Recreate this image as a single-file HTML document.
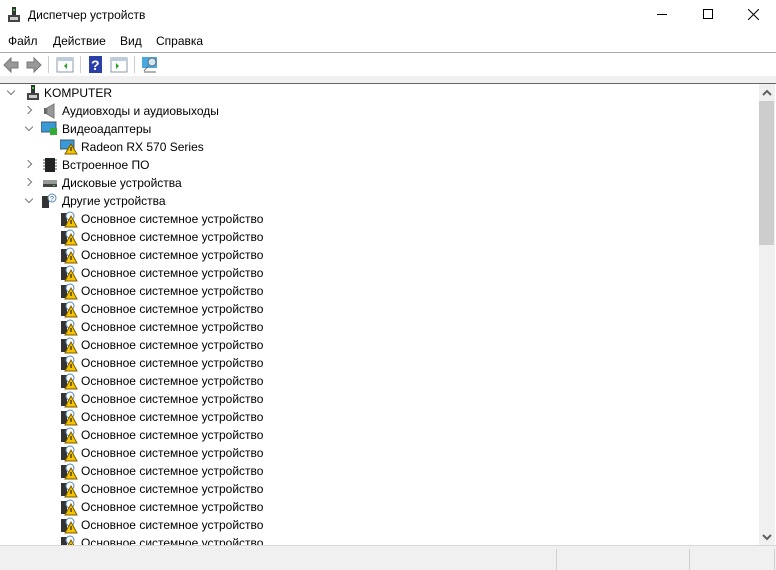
<!DOCTYPE html>
<html><head><meta charset="utf-8"><style>
*{margin:0;padding:0;box-sizing:border-box}
body{width:776px;height:570px;overflow:hidden;background:#fff;font-family:"Liberation Sans","DejaVu Sans",sans-serif;font-size:12px;color:#000;position:relative}
.abs{position:absolute}
.t{position:absolute;white-space:nowrap;line-height:14px}
.row{position:absolute;height:18px;white-space:nowrap}
.chev{position:absolute;width:6px;height:6px;border-right:1.5px solid #777;border-bottom:1.5px solid #777}
</style></head><body>
<!-- title bar -->
<svg class="abs" style="left:7px;top:7px" width="14" height="16"><rect x="5" y="0" width="4" height="8" fill="#333"/><rect x="6" y="2" width="2" height="2" fill="#3c3"/><rect x="1" y="8" width="12" height="7" fill="#444"/><rect x="3" y="10" width="8" height="3" fill="#ccc"/></svg>
<div class="t" style="left:28px;top:8px">Диспетчер устройств</div>
<div class="abs" style="left:657px;top:14px;width:10px;height:1px;background:#000"></div>
<div class="abs" style="left:703px;top:9px;width:10px;height:10px;border:1px solid #000"></div>
<svg class="abs" style="left:748px;top:9px" width="11" height="11"><path d="M0 0L11 11M11 0L0 11" stroke="#000" stroke-width="1"/></svg>
<!-- menu -->
<div class="t" style="left:8px;top:34px">Файл</div>
<div class="t" style="left:53px;top:34px">Действие</div>
<div class="t" style="left:120px;top:34px">Вид</div>
<div class="t" style="left:156px;top:34px">Справка</div>
<div class="abs" style="left:0;top:52px;width:776px;height:1px;background:#aaa"></div>
<!-- toolbar -->
<svg class="abs" style="left:0;top:53px" width="170" height="23">
<path d="M4 12l7-7v4h7v6h-7v4z" fill="#999" stroke="#777"/>
<path d="M41 12l-7-7v4h-7v6h7v4z" fill="#999" stroke="#777"/>
<rect x="48" y="3" width="1" height="17" fill="#ccc"/>
<rect x="57" y="5" width="16" height="14" fill="#fff" stroke="#8899aa"/><rect x="57" y="5" width="16" height="3" fill="#bcd"/><path d="M67 10l-3 3 3 3z" fill="#2a2"/>
<rect x="80" y="3" width="1" height="17" fill="#ccc"/>
<rect x="89" y="3" width="13" height="17" fill="#2b3fa8"/><text x="91" y="17" fill="#fff" font-size="14" font-weight="bold" font-family="Liberation Sans">?</text>
<rect x="111" y="5" width="16" height="14" fill="#fff" stroke="#8899aa"/><rect x="111" y="5" width="16" height="3" fill="#bcd"/><path d="M116 10l3 3-3 3z" fill="#2a2"/>
<rect x="134" y="3" width="1" height="17" fill="#ccc"/>
<rect x="142" y="4" width="15" height="11" fill="#4aa8e0"/><circle cx="152" cy="9" r="4" fill="#cfe8f8" stroke="#666"/><path d="M148 13l-4 5M144 19h12" stroke="#666"/>
</svg>
<div class="abs" style="left:0;top:76px;width:776px;height:7px;background:#f0f0f0"></div>
<div class="abs" style="left:0;top:83px;width:776px;height:1px;background:#666"></div>
<!-- scrollbar -->
<div class="abs" style="left:759px;top:84px;width:16px;height:461px;background:#f0f0f0"></div>
<div class="abs" style="left:759px;top:101px;width:15px;height:144px;background:#cdcdcd"></div>
<svg class="abs" style="left:762px;top:89px" width="10" height="8"><path d="M1 6l4-4 4 4" stroke="#606060" stroke-width="2" fill="none"/></svg>
<svg class="abs" style="left:762px;top:533px" width="10" height="8"><path d="M1 2l4 4 4-4" stroke="#606060" stroke-width="2" fill="none"/></svg>
<!-- status bar -->
<div class="abs" style="left:0;top:545px;width:776px;height:25px;background:#f0f0f0;border-top:1px solid #d8d8d8"></div>
<div class="abs" style="left:556px;top:549px;width:1px;height:21px;background:#d0d0d0"></div>
<div class="abs" style="left:689px;top:549px;width:1px;height:21px;background:#d0d0d0"></div>
<div class="abs" style="left:774px;top:549px;width:1px;height:21px;background:#d0d0d0"></div>
<!-- tree -->
<div class="abs" style="left:0;top:84px;width:759px;height:461px;overflow:hidden">
<div class="chev" style="left:8px;top:4px;transform:rotate(45deg)"></div>
<svg class="abs" style="left:26px;top:1px" width="14" height="16"><rect x="5" y="0" width="4" height="8" fill="#333"/><rect x="6" y="2" width="2" height="2" fill="#3c3"/><rect x="1" y="8" width="12" height="7" fill="#444"/><rect x="3" y="10" width="8" height="3" fill="#ccc"/></svg>
<div class="t" style="left:44px;top:2px">KOMPUTER</div>

<div class="chev" style="left:25px;top:23px;transform:rotate(-45deg)"></div>
<svg class="abs" style="left:43px;top:19px" width="14" height="16"><rect x="1" y="5" width="3" height="6" fill="#666"/><path d="M4 5l7-4v14l-7-4z" fill="#999" stroke="#777"/></svg>
<div class="t" style="left:62px;top:20px">Аудиовходы и аудиовыходы</div>

<div class="chev" style="left:26px;top:40px;transform:rotate(45deg)"></div>
<svg class="abs" style="left:41px;top:37px" width="17" height="16"><rect x="0" y="1" width="15" height="10" fill="#3a9ad8" stroke="#456"/><rect x="9" y="7" width="7" height="7" fill="#3a3"/></svg>
<div class="t" style="left:62px;top:38px">Видеоадаптеры</div>

<svg class="abs" style="left:60px;top:55px" width="18" height="16"><rect x="0" y="1" width="14" height="9" fill="#3a9ad8" stroke="#456"/><path d="M11 5l6 10h-12z" fill="#f5c400" stroke="#7a5a00"/><rect x="10.5" y="8" width="1" height="4" fill="#000"/></svg>
<div class="t" style="left:81px;top:56px">Radeon RX 570 Series</div>

<div class="chev" style="left:25px;top:77px;transform:rotate(-45deg)"></div>
<svg class="abs" style="left:43px;top:73px" width="14" height="16"><rect x="2" y="1" width="10" height="14" fill="#222"/><path d="M0 3h2M0 6h2M0 9h2M0 12h2M12 3h2M12 6h2M12 9h2M12 12h2" stroke="#555"/></svg>
<div class="t" style="left:62px;top:74px">Встроенное ПО</div>

<div class="chev" style="left:25px;top:95px;transform:rotate(-45deg)"></div>
<svg class="abs" style="left:42px;top:91px" width="16" height="16"><rect x="1" y="5" width="14" height="7" fill="#999"/><rect x="1" y="9" width="14" height="3" fill="#444"/><rect x="11" y="10" width="2" height="1" fill="#3c3"/></svg>
<div class="t" style="left:62px;top:92px">Дисковые устройства</div>

<div class="chev" style="left:26px;top:112px;transform:rotate(45deg)"></div>
<svg class="abs" style="left:41px;top:109px" width="17" height="16"><rect x="1" y="3" width="7" height="12" fill="#333"/><circle cx="11" cy="5" r="4" fill="#fff" stroke="#5588bb"/><text x="9" y="8" font-size="7" fill="#2255aa" font-family="Liberation Sans">?</text></svg>
<div class="t" style="left:62px;top:110px">Другие устройства</div>

<div id="items"></div>
</div>
<script>
var h='';for(var i=0;i<19;i++){var y=128+i*18;
h+='<svg class="abs" style="left:60px;top:'+(y-1)+'px" width="18" height="17"><rect x="1" y="2" width="6" height="13" fill="#333"/><circle cx="10" cy="5" r="4" fill="#fff" stroke="#5588bb"/><path d="M11 5l6 11h-12z" fill="#f5c400" stroke="#7a5a00"/><rect x="10.5" y="9" width="1" height="4" fill="#000"/></svg><div class="t" style="left:81px;top:'+y+'px">Основное системное устройство</div>';}
document.getElementById('items').outerHTML=h;
</script>
</body></html>
